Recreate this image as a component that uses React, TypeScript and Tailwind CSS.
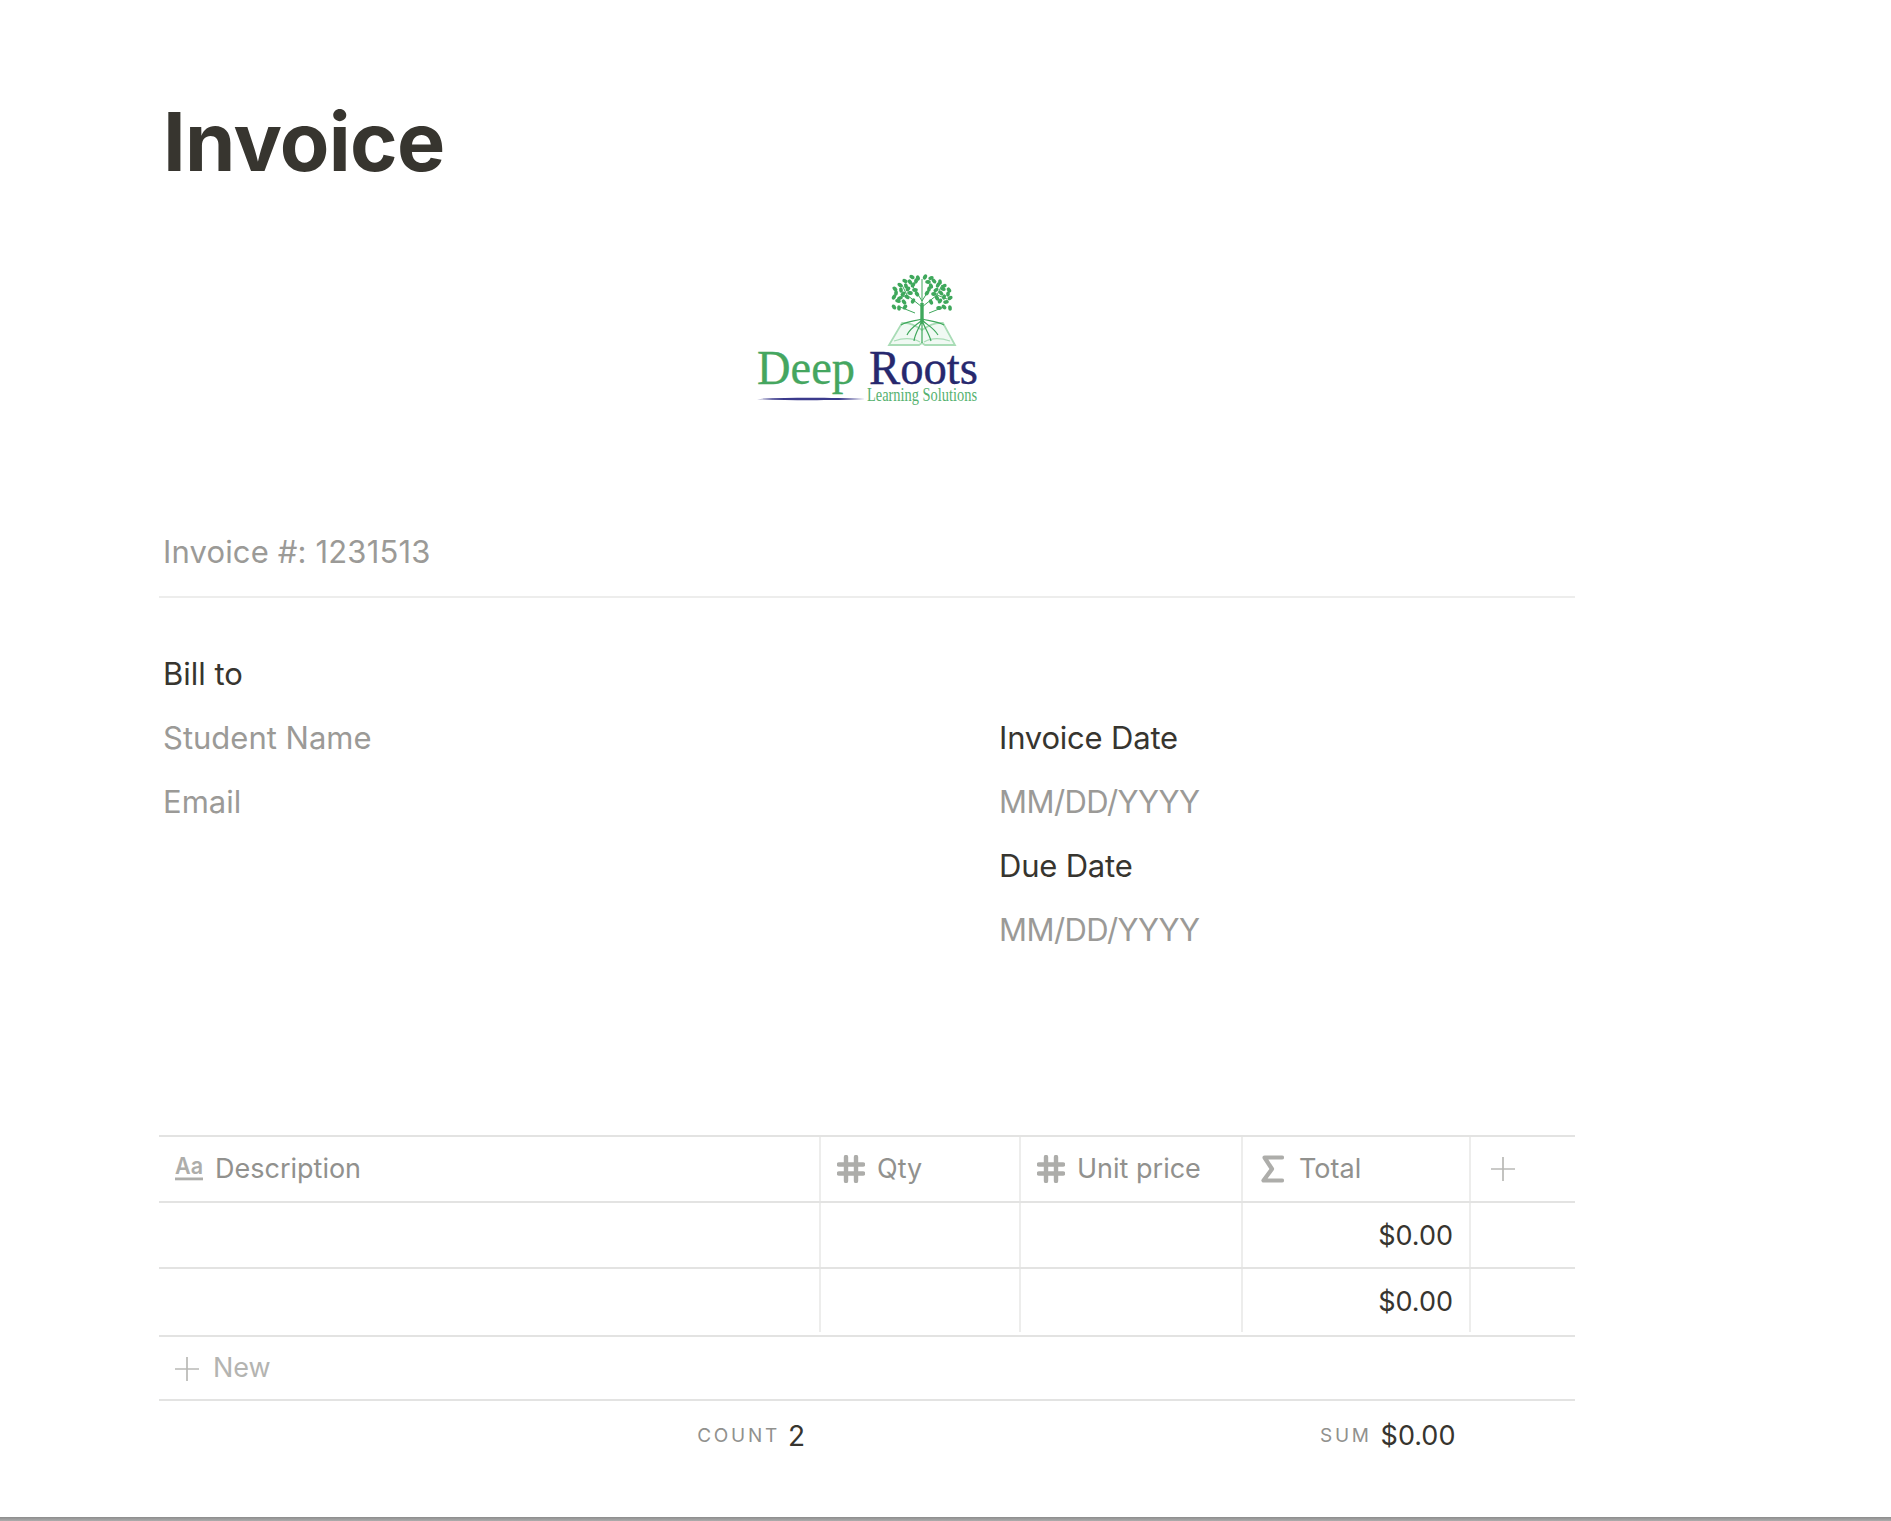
const font = "font-['Inter',sans-serif]";

function HashIcon() {
  return (
    <svg viewBox="0 0 28 28" className="w-7 h-7 shrink-0" fill="none" stroke="#adadaa" strokeWidth="4.4" strokeLinecap="round">
      <path d="M9 2v24M19 2v24M2 9.5h24M2 18.5h24" />
    </svg>
  );
}

function TextIcon() {
  return (
    <svg viewBox="0 0 28 24" className="w-7 h-6 shrink-0 overflow-visible">
      <text x="0" y="17" fontFamily="Inter, sans-serif" fontSize="23" fontWeight="600" fill="#adadaa" textLength="28" lengthAdjust="spacingAndGlyphs">Aa</text>
      <rect x="0" y="20.5" width="28" height="2.8" fill="#adadaa" />
    </svg>
  );
}

function SigmaIcon() {
  return (
    <svg viewBox="0 0 23 28" className="w-[23px] h-7 shrink-0 ml-0.5 mr-[3px]" fill="none" stroke="#adadaa" strokeWidth="4.2" strokeLinejoin="round" strokeLinecap="round">
      <path d="M21 2.5H3.5l7.5 11.5-8.5 11.5H21" />
    </svg>
  );
}

function PlusIcon({ size }: { size: string }) {
  return (
    <svg viewBox="0 0 24 24" className={size} fill="none" stroke="#b9b9b6" strokeWidth="1.7">
      <path d="M12 0v24M0 12h24" />
    </svg>
  );
}

const leafRows: [number, number[]][] = [
  [2, [155, 161, 168, 174]],
  [6, [148, 153, 159, 171, 177, 183]],
  [10, [143, 149, 156, 174, 181, 187]],
  [14, [138, 144, 151, 158, 172, 179, 186, 192]],
  [18, [139, 146, 153, 160, 170, 177, 184, 191]],
  [22, [137, 143, 150, 180, 187, 193]],
  [26, [141, 147, 156, 174, 183, 189]],
  [32, [137, 142, 148, 182, 187, 193]],
];

function Logo() {
  return (
    <svg viewBox="0 0 221 134" className="w-[221px] h-[134px] overflow-visible">
      <g fill="#f0f9f3" stroke="#a9dcb6" strokeWidth="1.8">
        <path d="M145 48C151 47 158 50 165 55C172 50 179 47 186 48L198 70H168L165 68L162 70H132Z" />
        <path fill="none" strokeWidth="1.2" d="M137 66C146 63 156 63 163 67M193 66C184 63 174 63 167 67" />
      </g>
      {leafRows.map(([y, xs]) =>
        xs.map((x, i) => (
          <ellipse key={`${y}-${x}`} cx={x} cy={y + (i % 2)} rx="2.8" ry="1.9" fill="#3fa85c" transform={`rotate(${(x * 7 + y * 11) % 180} ${x} ${y + (i % 2)})`} />
        ))
      )}
      <g fill="none" stroke="#3fa85c" strokeWidth="1">
        <path d="M165 32L150 20L145 10M165 32L180 20L185 10M165 26L155 10M165 26L175 10M165 30V4M150 20L140 24M180 20L190 24M158 38L143 32M172 38L187 32" />
        <path strokeWidth="3.4" d="M165 46V28" />
        <path strokeWidth="1.2" d="M165 44C158 46 150 46 144 50M165 44C172 46 180 46 187 50M165 45C160 50 154 52 150 60M165 45C170 50 176 52 181 60M165 45C163 52 158 58 157 66M165 45C167 52 172 58 174 66M165 45V68" />
      </g>
      <text x="0" y="109" fontFamily="'Liberation Serif', serif" fontSize="48" fill="#45a660" stroke="#45a660" strokeWidth="0.3" textLength="98" lengthAdjust="spacingAndGlyphs">Deep</text>
      <text x="112" y="109" fontFamily="'Liberation Serif', serif" fontSize="48" fill="#27286e" stroke="#27286e" strokeWidth="0.4" textLength="109" lengthAdjust="spacingAndGlyphs">Roots</text>
      <text x="110" y="126" fontFamily="'Liberation Serif', serif" fontSize="18" fill="#55b16f" textLength="110" lengthAdjust="spacingAndGlyphs">Learning Solutions</text>
      <path d="M0 124C30 122.4 75 122.4 108 124C75 125.6 30 125.6 0 124Z" fill="#3b3a8c" />
    </svg>
  );
}

function Line({ children, dark, className = "" }: { children: string; dark?: boolean; className?: string }) {
  return (
    <p className={`h-16 flex items-center text-[31px] pl-1 ${dark ? "text-[#37352f]" : "text-[#9b9a97]"} ${className}`}>{children}</p>
  );
}

const cols = "grid grid-cols-[662px_200px_222px_228px_104px]";

function Cell({ children, className = "" }: { children?: React.ReactNode; className?: string }) {
  return <div className={`flex items-center border-r-2 border-[#ededec] last:border-r-0 ${className}`}>{children}</div>;
}

function Header({ icon, label }: { icon: React.ReactNode; label: string }) {
  return (
    <Cell className="gap-3 px-4 text-[27px] text-[#91918e]">
      {icon}
      <span>{label}</span>
    </Cell>
  );
}

function Row({ last }: { last?: boolean }) {
  return (
    <div className={`${cols} ${last ? "h-[68px] pb-[3px]" : "h-[66px]"} border-b-2 border-[#e3e3e2]`}>
      <Cell />
      <Cell />
      <Cell />
      <Cell className={`justify-end pr-[16px] text-[27px] text-[#37352f] ${last ? "pt-1" : "pt-0.5"}`}>$0.00</Cell>
      <Cell />
    </div>
  );
}

export default function App() {
  return (
    <div className={`${font} relative h-[1521px] bg-white overflow-hidden`}>
      <div className="w-[1416px] ml-[159px] pt-[93px]">
        <h1 className="text-[81px] leading-[98px] font-bold tracking-[-0.7px] text-[#37352f] pl-1">Invoice</h1>

        <div className="flex justify-center mt-[84px]">
          <Logo />
        </div>

        <div className="mt-[111px] h-[76px]">
          <Line className="tracking-[0.15px]">Invoice #: 1231513</Line>
        </div>
        <div className="border-b-2 border-[#ededec]" />

        <div className="mt-[44px] grid grid-cols-[836px_1fr]">
          <div>
            <Line dark>Bill to</Line>
            <Line>Student Name</Line>
            <Line>Email</Line>
          </div>
          <div className="pt-16">
            <Line dark className="tracking-[-0.2px]">Invoice Date</Line>
            <Line className="tracking-[-0.55px]">MM/DD/YYYY</Line>
            <Line dark className="tracking-[-0.2px]">Due Date</Line>
            <Line className="tracking-[-0.55px]">MM/DD/YYYY</Line>
          </div>
        </div>

        <div className="mt-[173px] border-t-2 border-[#e3e3e2]">
          <div className={`${cols} h-[66px] border-b-2 border-[#e3e3e2]`}>
            <Header icon={<TextIcon />} label="Description" />
            <Header icon={<HashIcon />} label="Qty" />
            <Header icon={<HashIcon />} label="Unit price" />
            <Header icon={<SigmaIcon />} label="Total" />
            <Cell className="px-5"><PlusIcon size="w-6 h-6" /></Cell>
          </div>
          <Row />
          <Row last />
          <div className="h-[64px] flex items-center gap-[14px] px-4 pt-px text-[27px] text-[#b4b4b1] border-b-2 border-[#e3e3e2]">
            <PlusIcon size="w-6 h-6" />
            <span>New</span>
          </div>
          <div className={`${cols} h-[70px]`}>
            <div className="flex items-center justify-end gap-2 pr-4">
              <span className="text-[19px] tracking-[2.7px] text-[#91918e]">COUNT</span>
              <span className="text-[28px] text-[#37352f]">2</span>
            </div>
            <div />
            <div />
            <div className="col-span-2 flex items-center gap-[9px] pl-[77px]">
              <span className="text-[19px] tracking-[2.7px] text-[#91918e]">SUM</span>
              <span className="text-[27px] text-[#37352f]">$0.00</span>
            </div>
          </div>
        </div>
      </div>
      <div className="absolute left-0 right-0 bottom-0 h-1 bg-linear-to-b from-[#8c8c8c] to-[#adadad]" />
    </div>
  );
}
